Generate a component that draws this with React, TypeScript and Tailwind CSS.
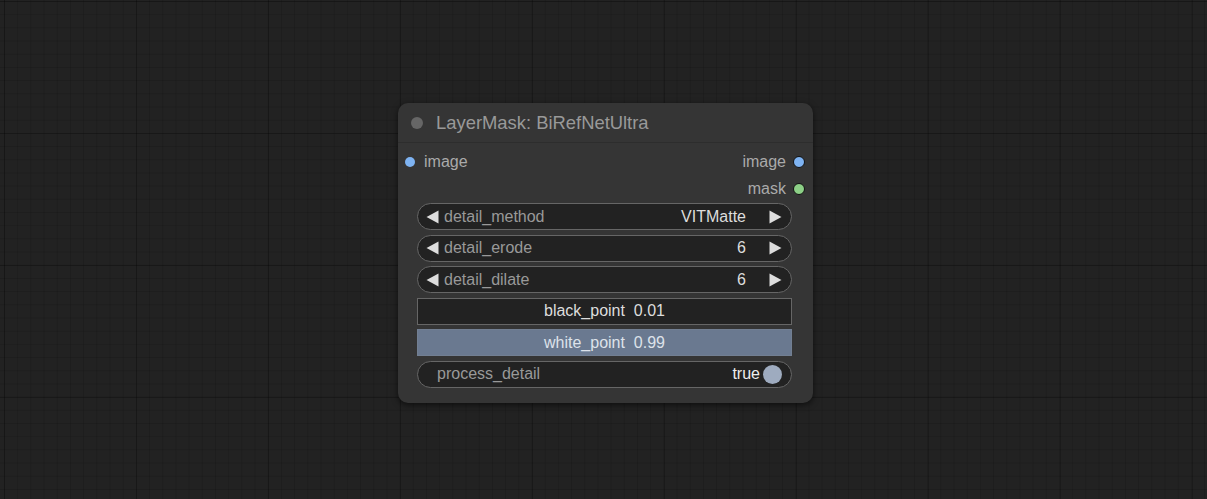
import React from "react";

const LeftArrow = () => (
  <svg width="13" height="14" viewBox="0 0 13 14" className="shrink-0">
    <polygon points="12.5,0.5 12.5,13.5 0.5,7" fill="#dddddd" />
  </svg>
);
const RightArrow = () => (
  <svg width="13" height="14" viewBox="0 0 13 14" className="shrink-0">
    <polygon points="0.5,0.5 0.5,13.5 12.5,7" fill="#dddddd" />
  </svg>
);

function Combo({ label, value }: { label: string; value: string }) {
  return (
    <div className="h-[27px] rounded-full border border-[#666] bg-[#222] flex items-center pl-[8px] pr-[9px]">
      <LeftArrow />
      <span className="ml-[5px] text-[#999]">{label}</span>
      <span className="ml-auto text-[#ddd]">{value}</span>
      <span className="ml-[23px] flex"><RightArrow /></span>
    </div>
  );
}

export default function App() {
  return (
    <div
      className="w-[1207px] h-[499px] overflow-hidden pl-[398px] pt-[103px] bg-[#222222] bg-[image:linear-gradient(to_right,rgba(0,0,0,0.22)_1px,transparent_1px),linear-gradient(to_bottom,rgba(0,0,0,0.22)_1px,transparent_1px),linear-gradient(to_right,rgba(0,0,0,0.12)_1px,transparent_1px),linear-gradient(to_bottom,rgba(0,0,0,0.12)_1px,transparent_1px)] bg-[size:132px_132px,132px_132px,13.2px_13.2px,13.2px_13.2px] bg-[position:4px_1px,4px_1px,4px_1px,4px_1px]"
      style={{ fontFamily: '"Liberation Sans", Arial, sans-serif' }}
    >
      <div className="w-[415px] h-[300px] rounded-[10px] bg-[#353535] shadow-[0_2px_6px_rgba(0,0,0,0.6)] flex flex-col text-[16px]">
        <div className="h-[40px] flex items-center pl-[13px] gap-[13px] pt-[1px] border-b border-[#2d2d2d]">
          <div className="w-[12px] h-[12px] rounded-full bg-[#666]" />
          <span className="text-[18.4px] text-[#999]">LayerMask: BiRefNetUltra</span>
        </div>
        <div className="flex flex-col pt-[5px]">
          <div className="h-[27px] flex items-center pl-[7px] pr-[8px]">
            <div className="w-[10px] h-[10px] rounded-full bg-[#7eb3f2]" />
            <span className="ml-[9px] text-[#aaa]">image</span>
            <span className="ml-auto text-[#aaa]">image</span>
            <div className="ml-[7px] w-[12px] h-[12px] rounded-full bg-[#7eb3f2] border border-[#111]" />
          </div>
          <div className="h-[27px] flex items-center pr-[8px]">
            <span className="ml-auto text-[#aaa]">mask</span>
            <div className="ml-[7px] w-[12px] h-[12px] rounded-full bg-[#8ccf86] border border-[#111]" />
          </div>
        </div>
        <div className="ml-[19px] w-[375px] mt-[1px] flex flex-col gap-[4.6px]">
          <Combo label="detail_method" value="VITMatte" />
          <Combo label="detail_erode" value="6" />
          <Combo label="detail_dilate" value="6" />
          <div className="h-[27px] border border-[#666] bg-[#222] flex items-center justify-center text-[#ddd] whitespace-pre">
            {"black_point  0.01"}
          </div>
          <div className="h-[27px] border border-[#727f92] bg-[#6a7990] flex items-center justify-center text-[#dde2ea] whitespace-pre">
            {"white_point  0.99"}
          </div>
          <div className="h-[27px] rounded-full border border-[#666] bg-[#222] flex items-center pl-[19px] pr-[9px]">
            <span className="text-[#999]">process_detail</span>
            <span className="ml-auto text-[#eee]">true</span>
            <div className="ml-[3px] w-[19px] h-[19px] rounded-full bg-[#9eabbf]" />
          </div>
        </div>
      </div>
    </div>
  );
}
